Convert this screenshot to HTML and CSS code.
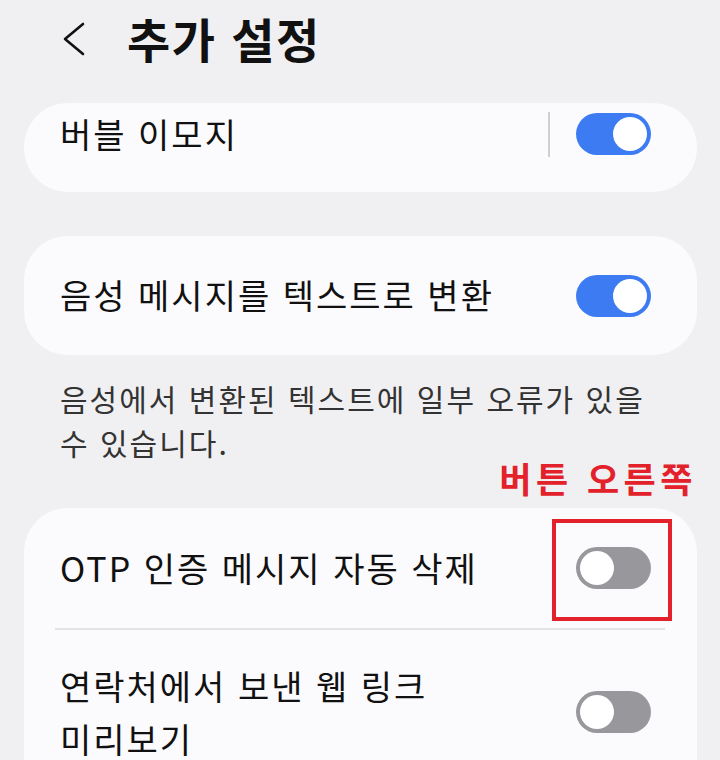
FILE: index.html
```html
<!DOCTYPE html>
<html lang="ko">
<head>
<meta charset="utf-8">
<link rel="stylesheet" href="styles.css">
</head>
<body>
<div class="screen">
  <header class="topbar">
    <svg class="back" width="24" height="34" viewBox="0 0 24 34"><polyline points="21,2 3,17 21,32" fill="none" stroke="#111" stroke-width="2.6" stroke-linecap="round" stroke-linejoin="round"/></svg>
    <h1 class="title">추가 설정</h1>
  </header>

  <section class="card card-first">
    <div class="row row-first">
      <span class="label">버블 이모지</span>
      <span class="vsep"></span>
      <span class="toggle on"><span class="knob"></span></span>
    </div>
  </section>

  <section class="card card-second">
    <div class="row row-mid">
      <span class="label">음성 메시지를 텍스트로 변환</span>
      <span class="toggle on"><span class="knob"></span></span>
    </div>
  </section>

  <p class="helper">음성에서 변환된 텍스트에 일부 오류가 있을 수 있습니다.</p>

  <div class="annot">버튼 오른쪽</div>

  <section class="card card-third">
    <div class="row row-otp">
      <span class="label">OTP 인증 메시지 자동 삭제</span>
      <span class="toggle-wrap">
        <span class="toggle off"><span class="knob"></span></span>
        <span class="redbox"></span>
      </span>
    </div>
    <div class="hsep"></div>
    <div class="row row-link">
      <span class="label two">연락처에서 보낸 웹 링크<br>미리보기</span>
      <span class="toggle off"><span class="knob"></span></span>
    </div>
  </section>
</div>
</body>
</html>
```

FILE: styles.css
```css
html, body {
  margin: 0;
  padding: 0;
  background: #f0f0f2;
}
body {
  font-family: "Noto Sans CJK KR", "Noto Sans", sans-serif;
  color: #111;
  width: 720px;
  height: 760px;
  overflow: hidden;
}
.screen {
  padding: 0 23px 0 24px;
}
.topbar {
  height: 74px;
  display: flex;
  align-items: center;
  padding-left: 38px;
}
.back {
  display: block;
  margin-top: 4px;
}
.title {
  margin: 0 0 0 41px;
  font-size: 47px;
  font-weight: 700;
  letter-spacing: 1.5px;
  line-height: 1;
}
.card {
  background: #fbfbfd;
  border-radius: 44px;
}
.card-first {
  margin-top: 29px;
  height: 89px;
}
.row {
  display: flex;
  align-items: center;
  padding: 0 46px 0 36px;
}
.label {
  flex: 1;
  font-size: 34px;
  line-height: 1.55;
  letter-spacing: 2px;
  color: #111;
}
.row-first {
  height: 62px;
}
.vsep {
  width: 2px;
  height: 45px;
  background: #cfcfd3;
  margin-right: 26px;
}
.card-second {
  margin-top: 44px;
  height: 119px;
  display: flex;
  align-items: center;
}
.card-second .row {
  flex: 1;
}
.toggle {
  position: relative;
  display: block;
  width: 75px;
  height: 42px;
  border-radius: 21px;
  flex: none;
}
.toggle.on { background: #3d7bf3; }
.toggle.off { background: #98979c; }
.knob {
  position: absolute;
  top: 4px;
  width: 34px;
  height: 34px;
  border-radius: 50%;
  background: #fff;
}
.toggle.on .knob { right: 4px; }
.toggle.off .knob { left: 4px; }
.helper {
  margin: 21px 30px 0 36px;
  font-size: 30px;
  line-height: 44px;
  letter-spacing: 2px;
  color: #333;
}
.annot {
  text-align: right;
  font-size: 35px;
  font-weight: 700;
  color: #e3212b;
  line-height: 28px;
  margin-top: 0;
  padding-right: 0;
  letter-spacing: 4.5px;
}
.card-third {
  margin-top: 16px;
  height: 300px;
}
.row-otp {
  height: 120px;
}
.toggle-wrap {
  position: relative;
  display: block;
}
.redbox {
  position: absolute;
  left: -24px;
  top: -28px;
  width: 112px;
  height: 94px;
  border: 4px solid #e3212b;
}
.hsep {
  height: 2px;
  background: #e3e3e6;
  margin: 0 32px 0 31px;
}
.row-link {
  padding-top: 29px;
}
.label.two {
  line-height: 53px;
}
```
